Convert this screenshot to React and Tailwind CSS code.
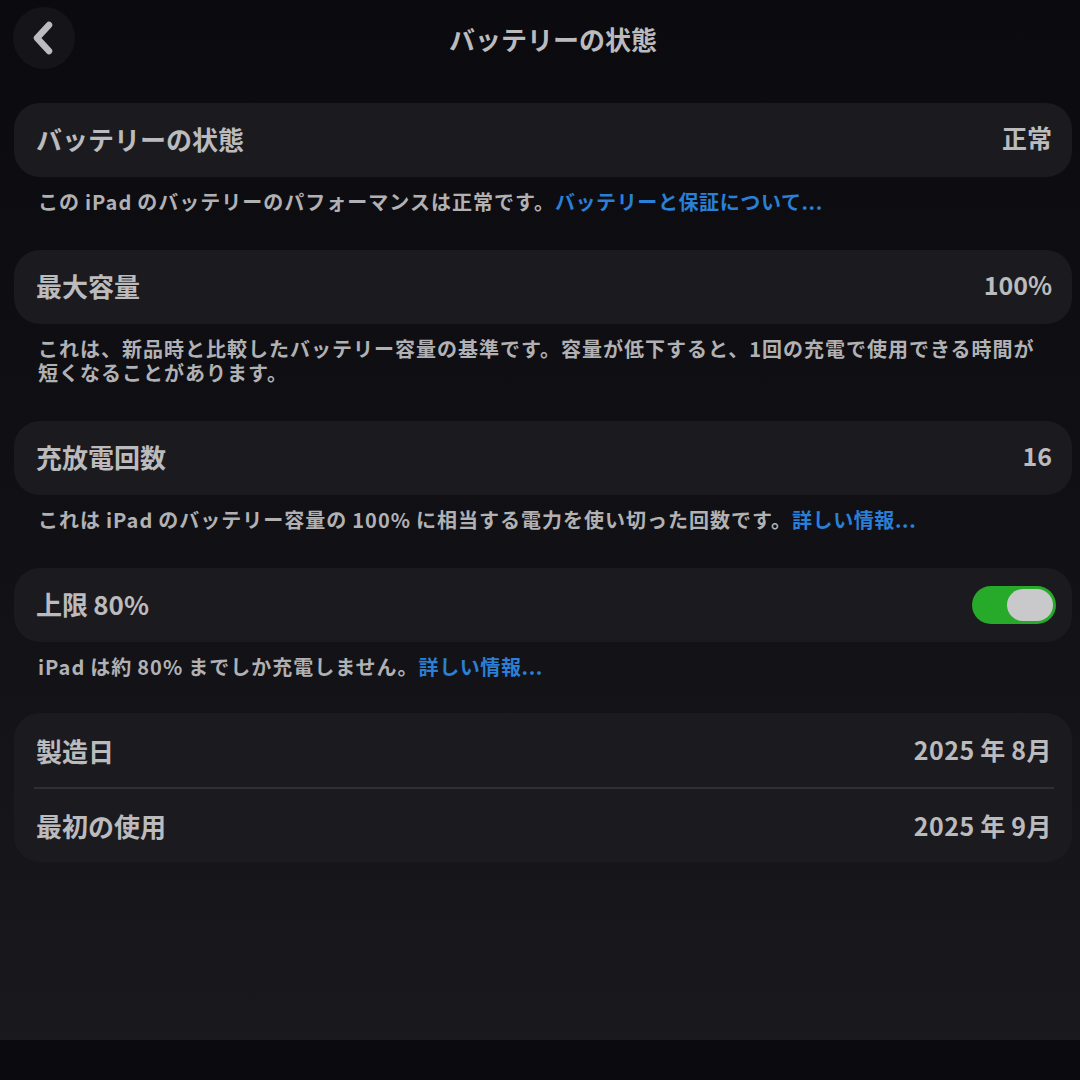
import React from 'react';

const font = { fontFamily: '"Noto Sans CJK JP", "Noto Sans", sans-serif' };

const Card = ({ children, className = '' }) => (
    <div className={`rounded-[26px] bg-[#1b1b1f] ${className}`}>{children}</div>
);

const Row = ({ label, value }) => (
    <div className="h-[74px] pl-[22px] pr-[20px] pb-[4px] flex items-center justify-between">
        <span className="text-[26px] font-bold text-[#bbbbbe]">{label}</span>
        <span className="text-[25px] font-bold text-[#bbbbbe]">{value}</span>
    </div>
);

const Note = ({ children }) => (
    <p className="pl-[24px] pr-[30px] pt-[13px] mb-[36px] text-[20px] leading-[24px] font-semibold text-[#b1b1b4] tracking-[1px]">
        {children}
    </p>
);

const Link = ({ children }) => (
    <span className="text-[#2a7fd6] tracking-[0.6px]">{children}</span>
);

const Toggle = () => (
    <div className="w-[84px] h-[38px] rounded-full bg-[#27aa2a] p-[3px] flex justify-end">
        <div className="w-[46px] h-[32px] rounded-full bg-[#c9c9cc]" />
    </div>
);

export default function App() {
    return (
        <div
            className="w-[1080px] h-[1080px] flex flex-col overflow-hidden bg-linear-to-b from-[#0a0a0f] via-[#111115] to-[#1a1a1e]"
            style={font}
        >
            {/* Header */}
            <header className="relative h-[80px] flex items-center justify-center">
                <button className="absolute left-[13px] top-[7px] w-[62px] h-[62px] rounded-full bg-[#151519] flex items-center justify-center">
                    <svg width="30" height="34" viewBox="0 0 30 34" fill="none">
                        <path d="M20 4 L8 17 L20 30" stroke="#bcbcbf" strokeWidth="6.5" strokeLinecap="round" strokeLinejoin="round" />
                    </svg>
                </button>
                <h1 className="text-[26px] font-bold text-[#bbbbbe] ml-[26px] -mt-[4px]">バッテリーの状態</h1>
            </header>

            <main className="flex-1 pl-[14px] pr-[8px] pt-[23px]">
                <Card>
                    <Row label="バッテリーの状態" value="正常" />
                </Card>
                <Note>
                    この&thinsp;iPad&thinsp;のバッテリーのパフォーマンスは正常です。<Link>バッテリーと保証について...</Link>
                </Note>

                <Card>
                    <Row label="最大容量" value="100%" />
                </Card>
                <Note>
                    これは、新品時と比較したバッテリー容量の基準です。容量が低下すると、1回の充電で使用できる時間が短くなることがあります。
                </Note>

                <Card>
                    <Row label="充放電回数" value="16" />
                </Card>
                <Note>
                    これは&thinsp;iPad&thinsp;のバッテリー容量の&thinsp;100%&thinsp;に相当する電力を使い切った回数です。<Link>詳しい情報...</Link>
                </Note>

                <Card>
                    <div className="h-[74px] pl-[22px] pr-[16px] flex items-center justify-between">
                        <span className="text-[26px] font-bold text-[#bbbbbe] -mt-[4px]">上限&thinsp;80%</span>
                        <Toggle />
                    </div>
                </Card>
                <Note>
                    iPad&thinsp;は約&thinsp;80%&thinsp;までしか充電しません。<Link>詳しい情報...</Link>
                </Note>

                <Card className="-mt-[2px]">
                    <div className="h-[74px] pl-[22px] pr-[20px] flex items-center justify-between">
                        <span className="text-[26px] font-bold text-[#bbbbbe]">製造日</span>
                        <span className="text-[25px] font-bold text-[#bbbbbe] tracking-[0.5px]">2025&thinsp;年&thinsp;8月</span>
                    </div>
                    <div className="ml-[20px] mr-[18px] h-[2px] bg-[#2f2f34]" />
                    <div className="h-[73px] pl-[22px] pr-[20px] flex items-center justify-between">
                        <span className="text-[26px] font-bold text-[#bbbbbe]">最初の使用</span>
                        <span className="text-[25px] font-bold text-[#bbbbbe] tracking-[0.5px]">2025&thinsp;年&thinsp;9月</span>
                    </div>
                </Card>
            </main>

            <div className="h-[40px] bg-[#0b0b0f]" />
        </div>
    );
}
